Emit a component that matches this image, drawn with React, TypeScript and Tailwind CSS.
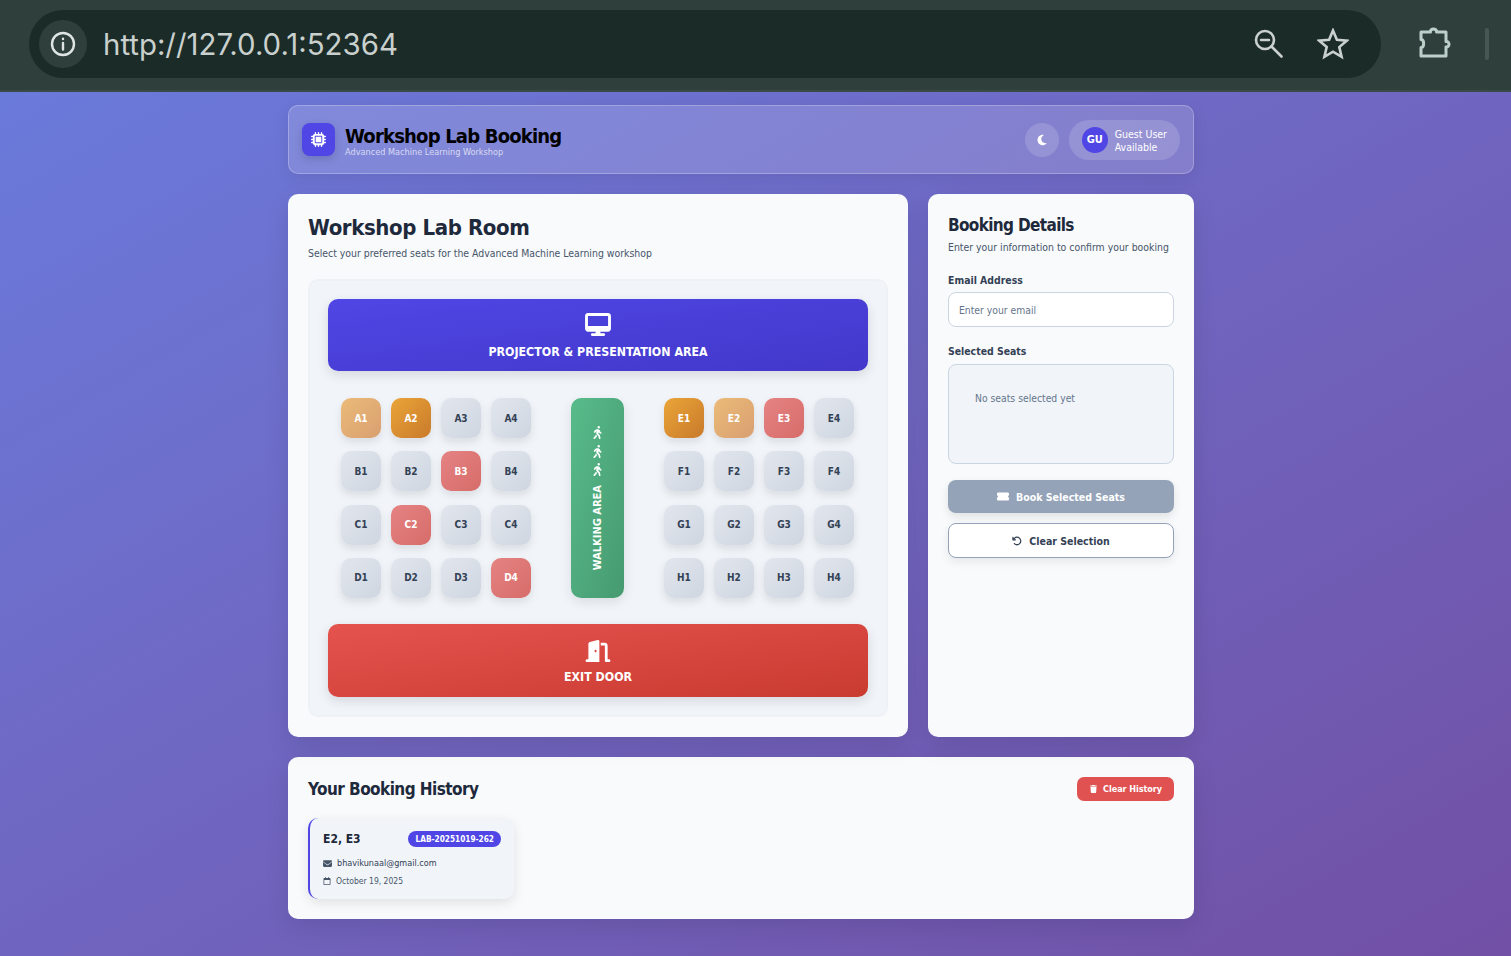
import React from 'react';
import {
  FaArrowRotateLeft,
  FaDesktop,
  FaDoorOpen,
  FaEnvelope,
  FaMicrochip,
  FaMoon,
  FaPersonWalking,
  FaRegCalendar,
  FaTicketSimple,
  FaTrash,
} from 'react-icons/fa6';

type SeatState = 'free' | 'light' | 'amber' | 'red';

const seatStyles: Record<SeatState, string> = {
  free: 'bg-gradient-to-br from-[#e2e6ee] to-[#cfd6e0] text-[#334155]',
  light: 'bg-gradient-to-br from-[#ebbb78] to-[#d99f71] text-white',
  amber: 'bg-gradient-to-br from-[#eaa538] to-[#c97a2b] text-white',
  red: 'bg-gradient-to-br from-[#e58383] to-[#d66c6a] text-white',
};

const leftSeats: [string, SeatState][] = [
  ['A1', 'light'], ['A2', 'amber'], ['A3', 'free'], ['A4', 'free'],
  ['B1', 'free'], ['B2', 'free'], ['B3', 'red'], ['B4', 'free'],
  ['C1', 'free'], ['C2', 'red'], ['C3', 'free'], ['C4', 'free'],
  ['D1', 'free'], ['D2', 'free'], ['D3', 'free'], ['D4', 'red'],
];

const rightSeats: [string, SeatState][] = [
  ['E1', 'amber'], ['E2', 'light'], ['E3', 'red'], ['E4', 'free'],
  ['F1', 'free'], ['F2', 'free'], ['F3', 'free'], ['F4', 'free'],
  ['G1', 'free'], ['G2', 'free'], ['G3', 'free'], ['G4', 'free'],
  ['H1', 'free'], ['H2', 'free'], ['H3', 'free'], ['H4', 'free'],
];

const SeatGroup = ({ seats }: { seats: [string, SeatState][] }) => (
  <div className="grid grid-cols-[repeat(4,40px)] grid-rows-[repeat(4,40px)] gap-x-[10px] gap-y-[13.33px]">
    {seats.map(([label, state]) => (
      <div
        key={label}
        className={`flex items-center justify-center rounded-[10px] text-[10px] font-bold shadow-[0_4px_8px_rgba(0,0,0,0.1)] ${seatStyles[state]}`}
      >
        {label}
      </div>
    ))}
  </div>
);

const BrowserBar = () => (
  <div className="flex h-[92px] items-start border-b-2 border-[#3a4a47] bg-[#2f403c] pl-[29px] pt-[10px]">
    <div className="flex h-[68px] w-[1352px] shrink-0 items-center rounded-full bg-[#1a2b28] pl-[10px] pr-[32px]">
      <div className="flex h-[48px] w-[48px] items-center justify-center rounded-full bg-[#2f403c]">
        <svg className="h-[26px] w-[26px]" viewBox="0 0 26 26" fill="none" stroke="#dfe5e2" strokeWidth="2.400" strokeLinecap="round">
          <circle cx="13" cy="13" r="11" />
          <path d="M13 12v6.500M13 7.800v.2" />
        </svg>
      </div>
      <span className="ml-[16px] flex-1 pt-[2px] font-['Inter',sans-serif] text-[29.400px] leading-none text-[#c9d0cd]">
        http://127.0.0.1:52364
      </span>
      <svg className="h-[30px] w-[30px]" viewBox="0 0 30 30" fill="none" stroke="#c9d0cd" strokeWidth="2.600" strokeLinecap="round">
        <circle cx="11" cy="11" r="9" />
        <path d="M7 11h8M17.500 17.500l10 10" />
      </svg>
      <svg className="ml-[33px] h-[32px] w-[32px]" viewBox="0 0 32 32" fill="none" stroke="#c9d0cd" strokeWidth="2.600" strokeLinejoin="miter">
        <path d="M16 2.500l3.900 9.300 10 .8-7.600 6.500 2.300 9.800L16 23.700l-8.600 5.200 2.300-9.800L2 12.600l10.100-.8z" />
      </svg>
    </div>
    <svg className="ml-[37px] mt-[15px] h-[34px] w-[34px] shrink-0" viewBox="0 0 34 34" fill="none" stroke="#bcd0c9" strokeWidth="3" strokeLinejoin="round">
      <path d="M3 7h9.500c-.5-4 6.500-4 6 0H28v9.500c4-.5 4 6 0 5.500v9H3v-8.500c3.500 0 3.500-8 0-8z" />
    </svg>
    <div className="ml-[33px] mt-[18px] h-[32px] w-[4px] shrink-0 rounded-full bg-[#475854]" />
  </div>
);

const AppHeader = () => (
  <header className="flex h-[69px] items-center justify-between rounded-[10px] border border-white/25 bg-white/15 px-[13px] shadow-[0_4px_16px_rgba(0,0,0,0.08)]">
    <div className="flex items-center gap-[10px]">
      <div className="flex h-[33px] w-[33px] items-center justify-center rounded-[8px] bg-[#4f46e5] shadow-[0_3px_8px_rgba(0,0,0,0.15)]">
        <FaMicrochip className="h-[15px] w-[15px] text-white" />
      </div>
      <div className="pt-[3px]">
        <h1 className="text-[20px] font-bold leading-[22px] tracking-[-0.8px] text-black">Workshop Lab Booking</h1>
        <p className="text-[9.100px] leading-[11px] text-white/70">Advanced Machine Learning Workshop</p>
      </div>
    </div>
    <div className="flex items-center gap-[10px]">
      <div className="flex h-[34px] w-[34px] items-center justify-center rounded-full bg-white/15">
        <FaMoon className="h-[12px] w-[12px] text-white" />
      </div>
      <div className="flex h-[40px] items-center gap-[7px] rounded-full bg-white/15 px-[13px]">
        <div className="flex h-[26px] w-[26px] items-center justify-center rounded-full bg-[#4f46e5] pt-[2px] text-[11px] font-bold text-white">
          GU
        </div>
        <div className="pt-[2px] text-[10.500px] leading-[13px] text-white">
          <div>Guest User</div>
          <div>Available</div>
        </div>
      </div>
    </div>
  </header>
);

const RoomCard = () => (
  <section className="w-[620px] rounded-[10px] bg-[#f8fafc] p-[20px] shadow-[0_8px_24px_rgba(0,0,0,0.1)]">
    <h2 className="text-[22px] font-bold leading-[28px] tracking-[-0.4px] text-[#1e293b]">Workshop Lab Room</h2>
    <p className="mt-[3px] text-[10.400px] leading-[16px] text-[#475569]">
      Select your preferred seats for the Advanced Machine Learning workshop
    </p>
    <div className="mt-[18px] rounded-[10px] border-2 border-[#eef2f7] bg-[#f1f5f9] p-[18px]">
      <div className="flex h-[72px] flex-col items-center justify-center rounded-[10px] bg-gradient-to-br from-[#4f46e5] to-[#4338ca] pt-[3px] text-white shadow-[0_4px_12px_rgba(0,0,0,0.12)]">
        <FaDesktop className="h-[23px] w-[26px]" />
        <span className="mt-[8px] text-[12.300px] font-bold leading-[16px]">PROJECTOR &amp; PRESENTATION AREA</span>
      </div>
      <div className="mt-[27px] flex justify-center gap-[40px] pr-[1px]">
        <SeatGroup seats={leftSeats} />
        <div className="flex h-[200px] w-[53px] flex-col items-center rounded-[10px] bg-gradient-to-br from-[#58bb8a] to-[#469a70] pt-[28px] text-white shadow-[0_4px_12px_rgba(0,0,0,0.1)]">
          <FaPersonWalking className="h-[13px] w-[13px]" />
          <FaPersonWalking className="mt-[6px] h-[13px] w-[13px]" />
          <FaPersonWalking className="mt-[5px] h-[13px] w-[13px]" />
          <span className="mt-[9px] rotate-180 text-[11px] font-bold leading-[13px] [writing-mode:vertical-rl]">WALKING AREA</span>
        </div>
        <SeatGroup seats={rightSeats} />
      </div>
      <div className="mt-[26px] flex h-[73px] flex-col items-center justify-center rounded-[10px] bg-gradient-to-br from-[#e5534f] to-[#c93a2f] pt-[3px] text-white shadow-[0_4px_12px_rgba(0,0,0,0.12)]">
        <FaDoorOpen className="h-[22px] w-[26px]" />
        <span className="mt-[7px] text-[12.300px] font-bold leading-[16px]">EXIT DOOR</span>
      </div>
    </div>
  </section>
);

const BookingCard = () => (
  <aside className="w-[266px] rounded-[10px] bg-[#f8fafc] p-[20px] shadow-[0_8px_24px_rgba(0,0,0,0.1)]">
    <h3 className="text-[17px] font-bold leading-[22px] tracking-[-0.65px] text-[#1e293b]">Booking Details</h3>
    <p className="mt-[3px] text-[10.400px] leading-[16px] text-[#475569]">Enter your information to confirm your booking</p>
    <label className="mt-[18px] block text-[10.400px] font-bold leading-[14px] text-[#334155]">Email Address</label>
    <div className="mt-[5px] flex h-[35px] items-center rounded-[8px] border border-[#cbd5e1] bg-white px-[10px] pt-[2px] text-[10.300px] text-[#64748b]">
      Enter your email
    </div>
    <label className="mt-[17px] block text-[10.400px] font-bold leading-[14px] text-[#334155]">Selected Seats</label>
    <div className="mt-[6px] h-[100px] rounded-[8px] border border-[#cbd5e1] bg-[#f1f5f9] px-[26px] pt-[26px] text-[10.300px] leading-[14px] text-[#64748b]">
      No seats selected yet
    </div>
    <button className="mt-[16px] flex h-[33px] w-full items-center justify-center gap-[7px] rounded-[8px] bg-[#94a3b8] pt-[2px] text-[10.500px] font-bold text-white shadow-[0_4px_10px_rgba(0,0,0,0.1)]">
      <FaTicketSimple className="mb-[2px] h-[11px] w-[12px]" />
      Book Selected Seats
    </button>
    <button className="mt-[10px] flex h-[35px] w-full items-center justify-center gap-[7px] rounded-[8px] border border-[#94a3b8] bg-white pt-[2px] text-[10.500px] font-bold text-[#334155] shadow-[0_4px_10px_rgba(0,0,0,0.08)]">
      <FaArrowRotateLeft className="mb-[2px] h-[10px] w-[10px]" />
      Clear Selection
    </button>
  </aside>
);

const HistoryCard = () => (
  <section className="mt-[20px] h-[162px] rounded-[10px] bg-[#f8fafc] p-[20px] shadow-[0_8px_24px_rgba(0,0,0,0.1)]">
    <div className="flex h-[24px] items-center justify-between">
      <h3 className="text-[17px] font-bold leading-[24px] tracking-[-0.55px] text-[#1e293b]">Your Booking History</h3>
      <button className="flex h-[24px] items-center gap-[6px] rounded-[7px] bg-[#e05252] pl-[13px] pr-[12px] pt-[1px] text-[9px] font-bold tracking-[-0.05px] text-white">
        <FaTrash className="mb-[2px] h-[8px] w-[7px]" />
        Clear History
      </button>
    </div>
    <div className="mt-[17px] h-[81px] w-[206px] rounded-[10px] border-l-2 border-[#4f46e5] bg-[#f1f5f9] px-[13px] pt-[13px] shadow-[0_4px_12px_rgba(0,0,0,0.1)]">
      <div className="flex items-center justify-between">
        <span className="text-[12px] font-bold leading-[16px] text-[#1e293b]">E2, E3</span>
        <span className="flex h-[16px] items-center rounded-full bg-[#4f46e5] px-[7px] pt-[1px] text-[8.200px] font-bold text-white">LAB-20251019-262</span>
      </div>
      <div className="mt-[9px] flex items-center gap-[5px] text-[9px] leading-[14px] text-[#334155]">
        <FaEnvelope className="h-[9px] w-[9px] text-[#475569]" />
        bhavikunaal@gmail.com
      </div>
      <div className="mt-[4px] flex items-center gap-[5px] text-[8.500px] leading-[14px] text-[#475569]">
        <FaRegCalendar className="h-[8px] w-[8px]" />
        October 19, 2025
      </div>
    </div>
  </section>
);

export default function App() {
  return (
    <div className="h-[956px] overflow-hidden font-['DejaVu_Sans_Condensed','DejaVu_Sans',sans-serif]">
      <BrowserBar />
      <div className="h-[864px] bg-gradient-to-br from-[#6a7adb] to-[#7150a5] pr-[29px] pt-[13px]">
        <div className="mx-auto w-[906px]">
          <AppHeader />
          <div className="mt-[20px] flex h-[543px] gap-[20px]">
            <RoomCard />
            <BookingCard />
          </div>
          <HistoryCard />
        </div>
      </div>
    </div>
  );
}
